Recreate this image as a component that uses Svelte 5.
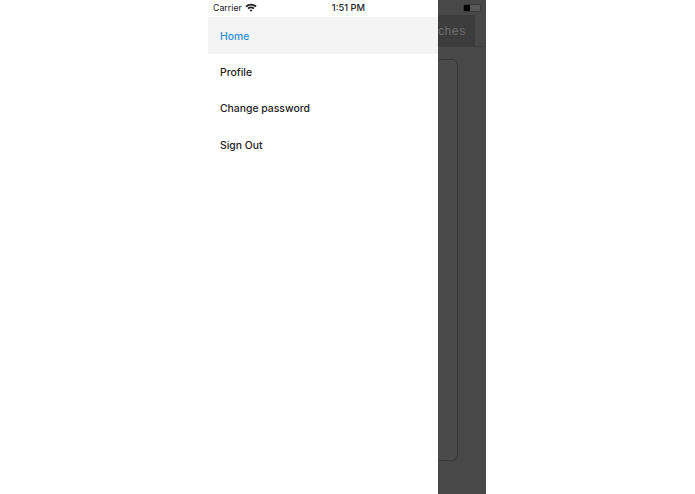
<script>
  const items = [
    { label: 'Home', active: true },
    { label: 'Profile', active: false },
    { label: 'Change password', active: false },
    { label: 'Sign Out', active: false }
  ];
</script>

<div class="page">
  <div class="phone">
    <aside class="drawer">
      <div class="status">
        <span class="carrier">Carrier</span>
        <svg class="wifi" width="12" height="9" viewBox="0 0 11 8" aria-hidden="true">
          <path d="M0.3 2.6 A7.4 7.4 0 0 1 10.7 2.6 L9.5 3.8 A5.7 5.7 0 0 0 1.5 3.8 Z" fill="#222"/>
          <path d="M2.2 4.5 A4.7 4.7 0 0 1 8.8 4.5 L7.6 5.7 A3 3 0 0 0 3.4 5.7 Z" fill="#222"/>
          <path d="M4.2 6.5 A1.8 1.8 0 0 1 6.8 6.5 L5.5 7.8 Z" fill="#222"/>
        </svg>
        <span class="time">1:51 PM</span>
      </div>
      <nav class="menu">
        {#each items as item}
          <div class="item" class:active={item.active}>{item.label}</div>
        {/each}
      </nav>
    </aside>
    <div class="behind">
      <div class="topbar">
        <div class="battery"><span class="level"></span></div>
      </div>
      <div class="tabs"><span class="tab">ches</span></div>
      <div class="panel"></div>
    </div>
  </div>
</div>

<style>
  :global(body) {
    margin: 0;
    background: #fff;
  }
  .page {
    width: 695px;
    height: 494px;
    display: flex;
    justify-content: flex-start;
    padding-left: 208px;
    box-sizing: border-box;
    overflow: hidden;
    font-family: Inter, "Liberation Sans", sans-serif;
  }
  .phone {
    width: 278px;
    height: 494px;
    display: flex;
  }
  .drawer {
    width: 230px;
    flex: none;
    background: #fff;
    display: flex;
    flex-direction: column;
  }
  .status {
    height: 17px;
    display: flex;
    align-items: center;
    font-size: 8.8px;
    color: #222;
    padding-left: 5px;
    padding-bottom: 2px;
    box-sizing: border-box;
  }
  .wifi {
    margin-left: 3px;
    margin-top: -1px;
  }
  .time {
    margin-left: 75px;
    font-size: 9.3px;
    font-weight: 500;
  }
  .menu {
    display: flex;
    flex-direction: column;
  }
  .item {
    height: 36.2px;
    line-height: 38px;
    padding-top: 1px;
    padding-left: 12px;
    box-sizing: border-box;
    font-size: 10.4px;
    font-weight: 500;
    color: #222;
  }
  .item.active {
    height: 37px;
    margin-bottom: -0.8px;
    background: #f4f4f4;
    color: #2f8fdc;
  }
  .behind {
    flex: 1;
    background: #484848;
    display: flex;
    flex-direction: column;
    overflow: hidden;
  }
  .topbar {
    height: 15px;
    display: flex;
    justify-content: flex-end;
    align-items: center;
    padding-right: 5px;
  }
  .battery {
    width: 18px;
    height: 8px;
    border: 1px solid #3a3a3a;
    border-radius: 2px;
    box-sizing: border-box;
    background: #585858;
  }
  .level {
    display: block;
    width: 6px;
    height: 100%;
    background: #000;
  }
  .tabs {
    height: 32px;
    border-bottom: 1px solid #3e3e3e;
    box-sizing: border-box;
    display: flex;
  }
  .tab {
    width: 37px;
    background: #3c3c3c;
    color: #6e6e6e;
    font-size: 12px;
    line-height: 33px;
    white-space: nowrap;
    display: block;
    letter-spacing: 0.6px;
    font-family: "Liberation Sans", sans-serif;
  }
  .panel {
    width: 20px;
    height: 402px;
    margin-top: 12px;
    border: 1px solid #363636;
    border-left: none;
    border-radius: 0 6px 6px 0;
    box-sizing: border-box;
    background: #4a4a4a;
  }
</style>
